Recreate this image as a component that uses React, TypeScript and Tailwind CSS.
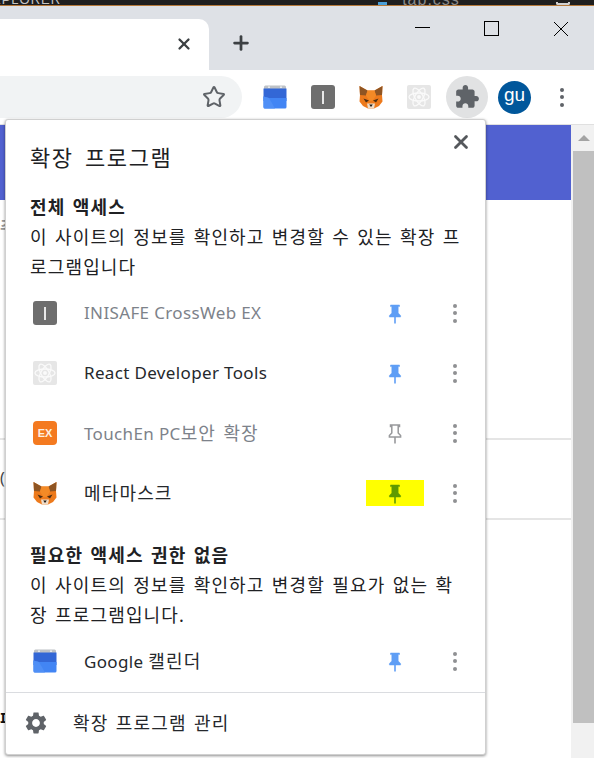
import { Star, X, Plus } from 'lucide-react';
import type { ReactNode } from 'react';

const FONT = "font-['Noto_Sans','Noto_Sans_CJK_KR',sans-serif]";
const KO = 'text-[18px] tracking-[1.15px] [word-spacing:1.5px]';

function Dots({ className }: { className: string }) {
  return (
    <div className={`flex flex-col gap-[3.5px] ${className}`}>
      <span className="size-[4px] rounded-full bg-current" />
      <span className="size-[4px] rounded-full bg-current" />
      <span className="size-[4px] rounded-full bg-current" />
    </div>
  );
}

function Pin({ color, outline }: { color: string; outline?: boolean }) {
  return (
    <svg width="14" height="20" viewBox="0 0 14 20" className="mt-[2px] shrink-0">
      <path
        d="M2.5 1H11.5V2.6H10.2V9L12.6 11.6V13H1.4V11.6L3.8 9V2.6H2.5Z"
        fill={outline ? 'none' : color}
        stroke={color}
        strokeWidth={outline ? 1.5 : 0.5}
      />
      <path d="M7 13V19.5" stroke={color} strokeWidth="1.6" />
    </svg>
  );
}

function Fox() {
  return (
    <svg width="24" height="24" viewBox="0 0 24 24">
      <path d="M0.5 1L8.5 5.5H15.5L23.5 1L23 10L23.5 16.5L20 21L15 23.5H9L4 21L0.5 16.5L1 10Z" fill="#ed7a1c" />
      <path d="M0.5 1L8.5 5.5L7 10.5L1 10Z" fill="#8f5523" />
      <path d="M23.5 1L15.5 5.5L17 10.5L23 10Z" fill="#8f5523" />
      <path d="M8.5 5.5H15.5L17 10.5L13.5 16H10.5L7 10.5Z" fill="#f38a26" />
      <path d="M4.5 13.5L10 15.5L7 17.5Z" fill="#4a2e14" />
      <path d="M19.5 13.5L14 15.5L17 17.5Z" fill="#4a2e14" />
      <path d="M8 18.5H16L15 23.5H9Z" fill="#efdcc8" />
      <path d="M10.2 19.5H13.8L12 22Z" fill="#1f1a16" />
    </svg>
  );
}

function Calendar() {
  return (
    <svg width="24" height="24" viewBox="0 0 24 24">
      <path d="M1 2Q1 0.5 2.5 0.5H21.5Q23 0.5 23 2V5H1Z" fill="#bdc1c6" />
      <circle cx="6" cy="2.2" r="0.9" fill="#f1f3f4" />
      <circle cx="18" cy="2.2" r="0.9" fill="#f1f3f4" />
      <path d="M0.5 3.5H23.5V16H0.5Z" fill="#3367d6" />
      <path d="M0.5 11.5L6 13H23.5V22Q23.5 23.5 22 23.5H2Q0.5 23.5 0.5 22Z" fill="#4285f4" />
      <path d="M0.5 11.5L6 13L12 23.5H2Q0.5 23.5 0.5 22Z" fill="#4f8ff6" />
    </svg>
  );
}

function IBox() {
  return (
    <div className="flex size-[24px] items-center justify-center rounded-[3px] bg-[#6e6e6e]">
      <span className="h-[13px] w-[2px] bg-[#e8e8e8]" />
    </div>
  );
}

function ReactBox() {
  return (
    <svg width="24" height="24" viewBox="0 0 24 24">
      <rect width="24" height="24" rx="2" fill="#e6e6e6" />
      <g fill="none" stroke="#fafafa" strokeWidth="1.3">
        <ellipse cx="12" cy="12" rx="10" ry="4" />
        <ellipse cx="12" cy="12" rx="10" ry="4" transform="rotate(60 12 12)" />
        <ellipse cx="12" cy="12" rx="10" ry="4" transform="rotate(120 12 12)" />
      </g>
      <circle cx="12" cy="12" r="2" fill="#fafafa" />
    </svg>
  );
}

function ExBox() {
  return (
    <div className="flex size-[24px] items-center justify-center rounded-[4px] bg-[#f47a20]">
      <span className="font-['Liberation_Sans',sans-serif] text-[11px] font-bold leading-none text-[#fdeee0]">EX</span>
    </div>
  );
}

function PuzzleIcon() {
  return (
    <svg width="26" height="26" viewBox="0 0 24 24" fill="#5f6368">
      <path d="M20.5 11H19V7c0-1.1-.9-2-2-2h-4V3.5C13 2.12 11.88 1 10.5 1S8 2.12 8 3.5V5H4c-1.1 0-1.99.9-1.99 2v3.8H3.5c1.49 0 2.7 1.21 2.7 2.7s-1.21 2.7-2.7 2.7H2V20c0 1.1.9 2 2 2h3.8v-1.5c0-1.49 1.21-2.7 2.7-2.7 1.49 0 2.7 1.21 2.7 2.7V22H17c1.1 0 2-.9 2-2v-4h1.5c1.38 0 2.5-1.12 2.5-2.5S21.88 11 20.5 11z" />
    </svg>
  );
}

function GearIcon() {
  return (
    <svg width="26" height="26" viewBox="0 0 24 24" fill="#5f6368" className="mr-[24px] shrink-0">
      <path d="M19.14 12.94c.04-.3.06-.61.06-.94 0-.32-.02-.64-.07-.94l2.03-1.58c.18-.14.23-.41.12-.61l-1.92-3.32c-.12-.22-.37-.29-.59-.22l-2.39.96c-.5-.38-1.03-.7-1.62-.94l-.36-2.54c-.04-.24-.24-.41-.48-.41h-3.84c-.24 0-.43.17-.47.41l-.36 2.54c-.59.24-1.13.57-1.62.94l-2.39-.96c-.22-.08-.47 0-.59.22L2.74 8.87c-.12.21-.08.47.12.61l2.03 1.58c-.05.3-.09.63-.09.94s.02.64.07.94l-2.03 1.58c-.18.14-.23.41-.12.61l1.92 3.32c.12.22.37.29.59.22l2.39-.96c.5.38 1.03.7 1.62.94l.36 2.54c.05.24.24.41.48.41h3.84c.24 0 .44-.17.47-.41l.36-2.54c.59-.24 1.13-.56 1.62-.94l2.39.96c.22.08.47 0 .59-.22l1.92-3.32c.12-.22.07-.47-.12-.61l-2.01-1.58zM12 15.6c-1.98 0-3.6-1.62-3.6-3.6s1.62-3.6 3.6-3.6 3.6 1.62 3.6 3.6-1.62 3.6-3.6 3.6z" />
    </svg>
  );
}

function Row({
  icon,
  label,
  muted,
  pin,
  outline,
  highlight,
}: {
  icon: ReactNode;
  label: ReactNode;
  muted?: boolean;
  pin: string;
  outline?: boolean;
  highlight?: boolean;
}) {
  return (
    <div className="flex h-[60px] items-center pl-[27px]">
      <div className="w-[51px] shrink-0">{icon}</div>
      <div className={`flex-1 text-[17px] tracking-[0.35px] ${muted ? 'text-[#7d828a]' : 'text-[#25282c]'}`}>{label}</div>
      <div className={`mr-[29px] flex h-[26px] w-[58px] items-center justify-center overflow-hidden ${highlight ? 'bg-[#ffff00]' : ''}`}>
        <Pin color={pin} outline={outline} />
      </div>
      <Dots className="mr-[28px] text-[#8f9093]" />
    </div>
  );
}

function Popup() {
  return (
    <div className={`absolute left-[5px] top-[119px] flex h-[636px] w-[481px] flex-col rounded-[3px] border-[0.5px] border-[#d0d0d0] bg-white shadow-[0_1px_3px_rgba(0,0,0,0.45)] ${FONT}`}>
      <button className="absolute right-[13px] top-[11px] text-[#55585c]">
        <X size={22} strokeWidth={3} />
      </button>
      <div className="pl-[24px] pt-[21px] text-[22px] leading-[32px] tracking-[1.6px] text-[#202124] [word-spacing:4px]">확장 프로그램</div>
      <div className={`pl-[24px] pr-[24px] pt-[19px] leading-[30px] text-[#202124] ${KO}`}>
        <div className="font-bold">전체 액세스</div>
        <div>이 사이트의 정보를 확인하고 변경할 수 있는 확장 프로그램입니다</div>
      </div>
      <div className="pt-[1px]">
        <Row icon={<IBox />} label="INISAFE CrossWeb EX" muted pin="#5f9ef5" />
        <Row icon={<ReactBox />} label="React Developer Tools" pin="#5f9ef5" />
        <Row icon={<ExBox />} label={<>TouchEn PC<span className={KO}>보안 확장</span></>} muted pin="#98999c" outline />
        <Row icon={<Fox />} label={<span className={KO}>메타마스크</span>} pin="#5f9a00" highlight />
      </div>
      <div className={`pl-[24px] pr-[24px] pt-[17px] leading-[30px] text-[#202124] ${KO}`}>
        <div className="font-bold">필요한 액세스 권한 없음</div>
        <div>이 사이트의 정보를 확인하고 변경할 필요가 없는 확장 프로그램입니다.</div>
      </div>
      <div className="mt-[1px] pb-[1px]">
        <Row icon={<Calendar />} label={<>Google <span className={KO}>캘린더</span></>} pin="#5f9ef5" />
      </div>
      <div className={`flex h-[61px] items-center border-t border-[#dadce0] pl-[17px] text-[#25282c] ${KO}`}>
        <GearIcon />
        확장 프로그램 관리
      </div>
    </div>
  );
}

export default function App() {
  return (
    <div className={`relative flex h-[758px] w-[594px] flex-col overflow-hidden bg-white ${FONT}`}>
      {/* window behind the browser */}
      <div className="flex h-[6px] shrink-0 items-end overflow-hidden border-b border-[#b5793a] bg-[#1e1e1e] font-['Liberation_Sans',sans-serif] text-[13px] leading-[13px] tracking-[1px] text-[#c4c4c4]">
        <span className="-ml-[8px] mb-[-1px] shrink-0">XPLORER</span>
        <span className="ml-[317px] h-[3px] w-[9px] shrink-0 bg-[#4a9fd8]" />
        <span className="mb-[-1px] ml-[15px] shrink-0 text-[16px] text-[#8a8a8a]">tab.css</span>
        <span className="ml-auto mr-[24px] h-[3px] w-[14px] shrink-0 rounded-b-[2px] border-x-2 border-b-2 border-[#d0d0d0]" />
      </div>

      {/* tab strip */}
      <div className="flex h-[64px] shrink-0 bg-[#dee1e6] pt-[13px]">
        <div className="flex h-[51px] w-[209px] items-start justify-end rounded-tr-[10px] bg-white pr-[16px] pt-[16px]">
          <X size={18} strokeWidth={3} color="#3c4043" />
        </div>
        <Plus size={22} strokeWidth={3} color="#3c4043" className="ml-[21px] mt-[13px]" />
        <div className="ml-auto flex h-[30px] items-start">
          <span className="mr-[54px] mt-[8px] h-[1px] w-[15px] bg-black" />
          <span className="mr-[54px] mt-[2px] size-[15px] border border-black" />
          <svg width="16" height="16" viewBox="0 0 16 16" className="mr-[25px] mt-[2px]">
            <path d="M1 1L15 15M15 1L1 15" stroke="#000000" strokeWidth="1" />
          </svg>
        </div>
      </div>

      {/* toolbar */}
      <div className="flex h-[54px] shrink-0 items-center bg-white">
        <div className="flex h-[42px] w-[242px] items-center justify-end rounded-r-[21px] bg-[#f1f3f4] pr-[16px]">
          <Star size={24} strokeWidth={2} color="#5f6368" />
        </div>
        <div className="ml-[21px] flex items-center gap-[24px]">
          <Calendar />
          <IBox />
          <Fox />
          <ReactBox />
        </div>
        <div className="ml-[15px] flex size-[42px] items-center justify-center rounded-full bg-[#e1e2e3]">
          <PuzzleIcon />
        </div>
        <div className="ml-[10px] flex size-[33px] items-center justify-center rounded-full bg-[#01579b] pb-[3px] font-['Liberation_Sans',sans-serif] text-[19px] text-white">
          gu
        </div>
        <Dots className="ml-[29px] text-[#5f6368]" />
      </div>

      {/* page behind the popup */}
      <div className="flex min-h-0 flex-1 border-t border-[#e0e0e0]">
        <div className="flex min-w-0 flex-1 flex-col text-[16px] leading-[20px]">
          <div className="h-[75px] shrink-0 bg-[#5161d0]" />
          <div className="h-[240px] shrink-0 border-b-2 border-[#e5e5e5] pt-[17px] font-bold text-[#9a9a9a]">주</div>
          <div className="h-[80px] shrink-0 border-b-2 border-[#e5e5e5] pt-[28px] text-[#444444]">(</div>
          <div className="flex-1 pt-[189px] font-bold text-[#111111]">파</div>
        </div>
        <div className="flex w-[23px] shrink-0 flex-col bg-[#f1f1f1] pl-[2px]">
          <div className="flex h-[26px] items-center justify-center">
            <span className="border-x-[6px] border-b-[6px] border-x-transparent border-b-[#a3a3a3]" />
          </div>
          <div className="h-[572px] bg-[#c0c0c0]" />
        </div>
      </div>

      <Popup />
    </div>
  );
}
